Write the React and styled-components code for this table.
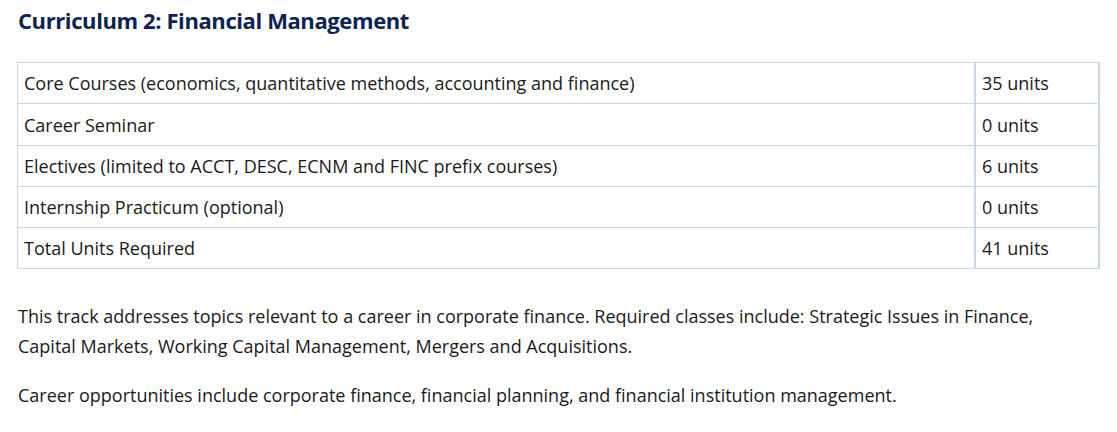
import React from "react";
import styled, { createGlobalStyle } from "styled-components";

const Global = createGlobalStyle`
  body { margin: 0; background: #fff; }
`;

const Page = styled.div`
  padding: 4px 17px 0 18px;
  font-family: "Open Sans", "Noto Sans", sans-serif;
  color: #1a1a1a;
`;

const Title = styled.h2`
  margin: 0 0 26px;
  font-size: 22px;
  line-height: 32px;
  font-weight: 700;
  color: #0d2350;
  letter-spacing: -0.4px;
`;

const Table = styled.table`
  width: 1083px;
  margin-left: -1px;
  border-collapse: collapse;
  font-size: 18px;
  margin-bottom: 32px;
`;

const Cell = styled.td`
  border: 1px solid #c9d7e7;
  border-left-width: ${(p) => (p.$value ? "2px" : "1px")};
  border-right-width: ${(p) => (p.$value ? "2px" : "1px")};
  padding: 0 6px;
  height: ${(p) => (p.$tall ? "41px" : "40px")};
  width: ${(p) => (p.$value ? "110px" : "auto")};
`;

const Para = styled.p`
  margin: 0 0 19px;
  font-size: 18px;
  line-height: 30px;
  max-width: 1060px;
`;

const rows = [
  ["Core Courses (economics, quantitative methods, accounting and finance)", "35 units"],
  ["Career Seminar", "0 units", true],
  ["Electives (limited to ACCT, DESC, ECNM and FINC prefix courses)", "6 units"],
  ["Internship Practicum (optional)", "0 units"],
  ["Total Units Required", "41 units"],
];

export default function App() {
  return (
    <Page>
      <Global />
      <Title>Curriculum 2: Financial Management</Title>
      <Table>
        <tbody>
          {rows.map(([a, b, tall]) => (
            <tr key={a}>
              <Cell $tall={tall}>{a}</Cell>
              <Cell $value $tall={tall}>{b}</Cell>
            </tr>
          ))}
        </tbody>
      </Table>
      <Para>
        This track addresses topics relevant to a career in corporate finance. Required classes include: Strategic Issues in Finance, Capital Markets, Working Capital Management, Mergers and Acquisitions.
      </Para>
      <Para>
        Career opportunities include corporate finance, financial planning, and financial institution management.
      </Para>
    </Page>
  );
}
